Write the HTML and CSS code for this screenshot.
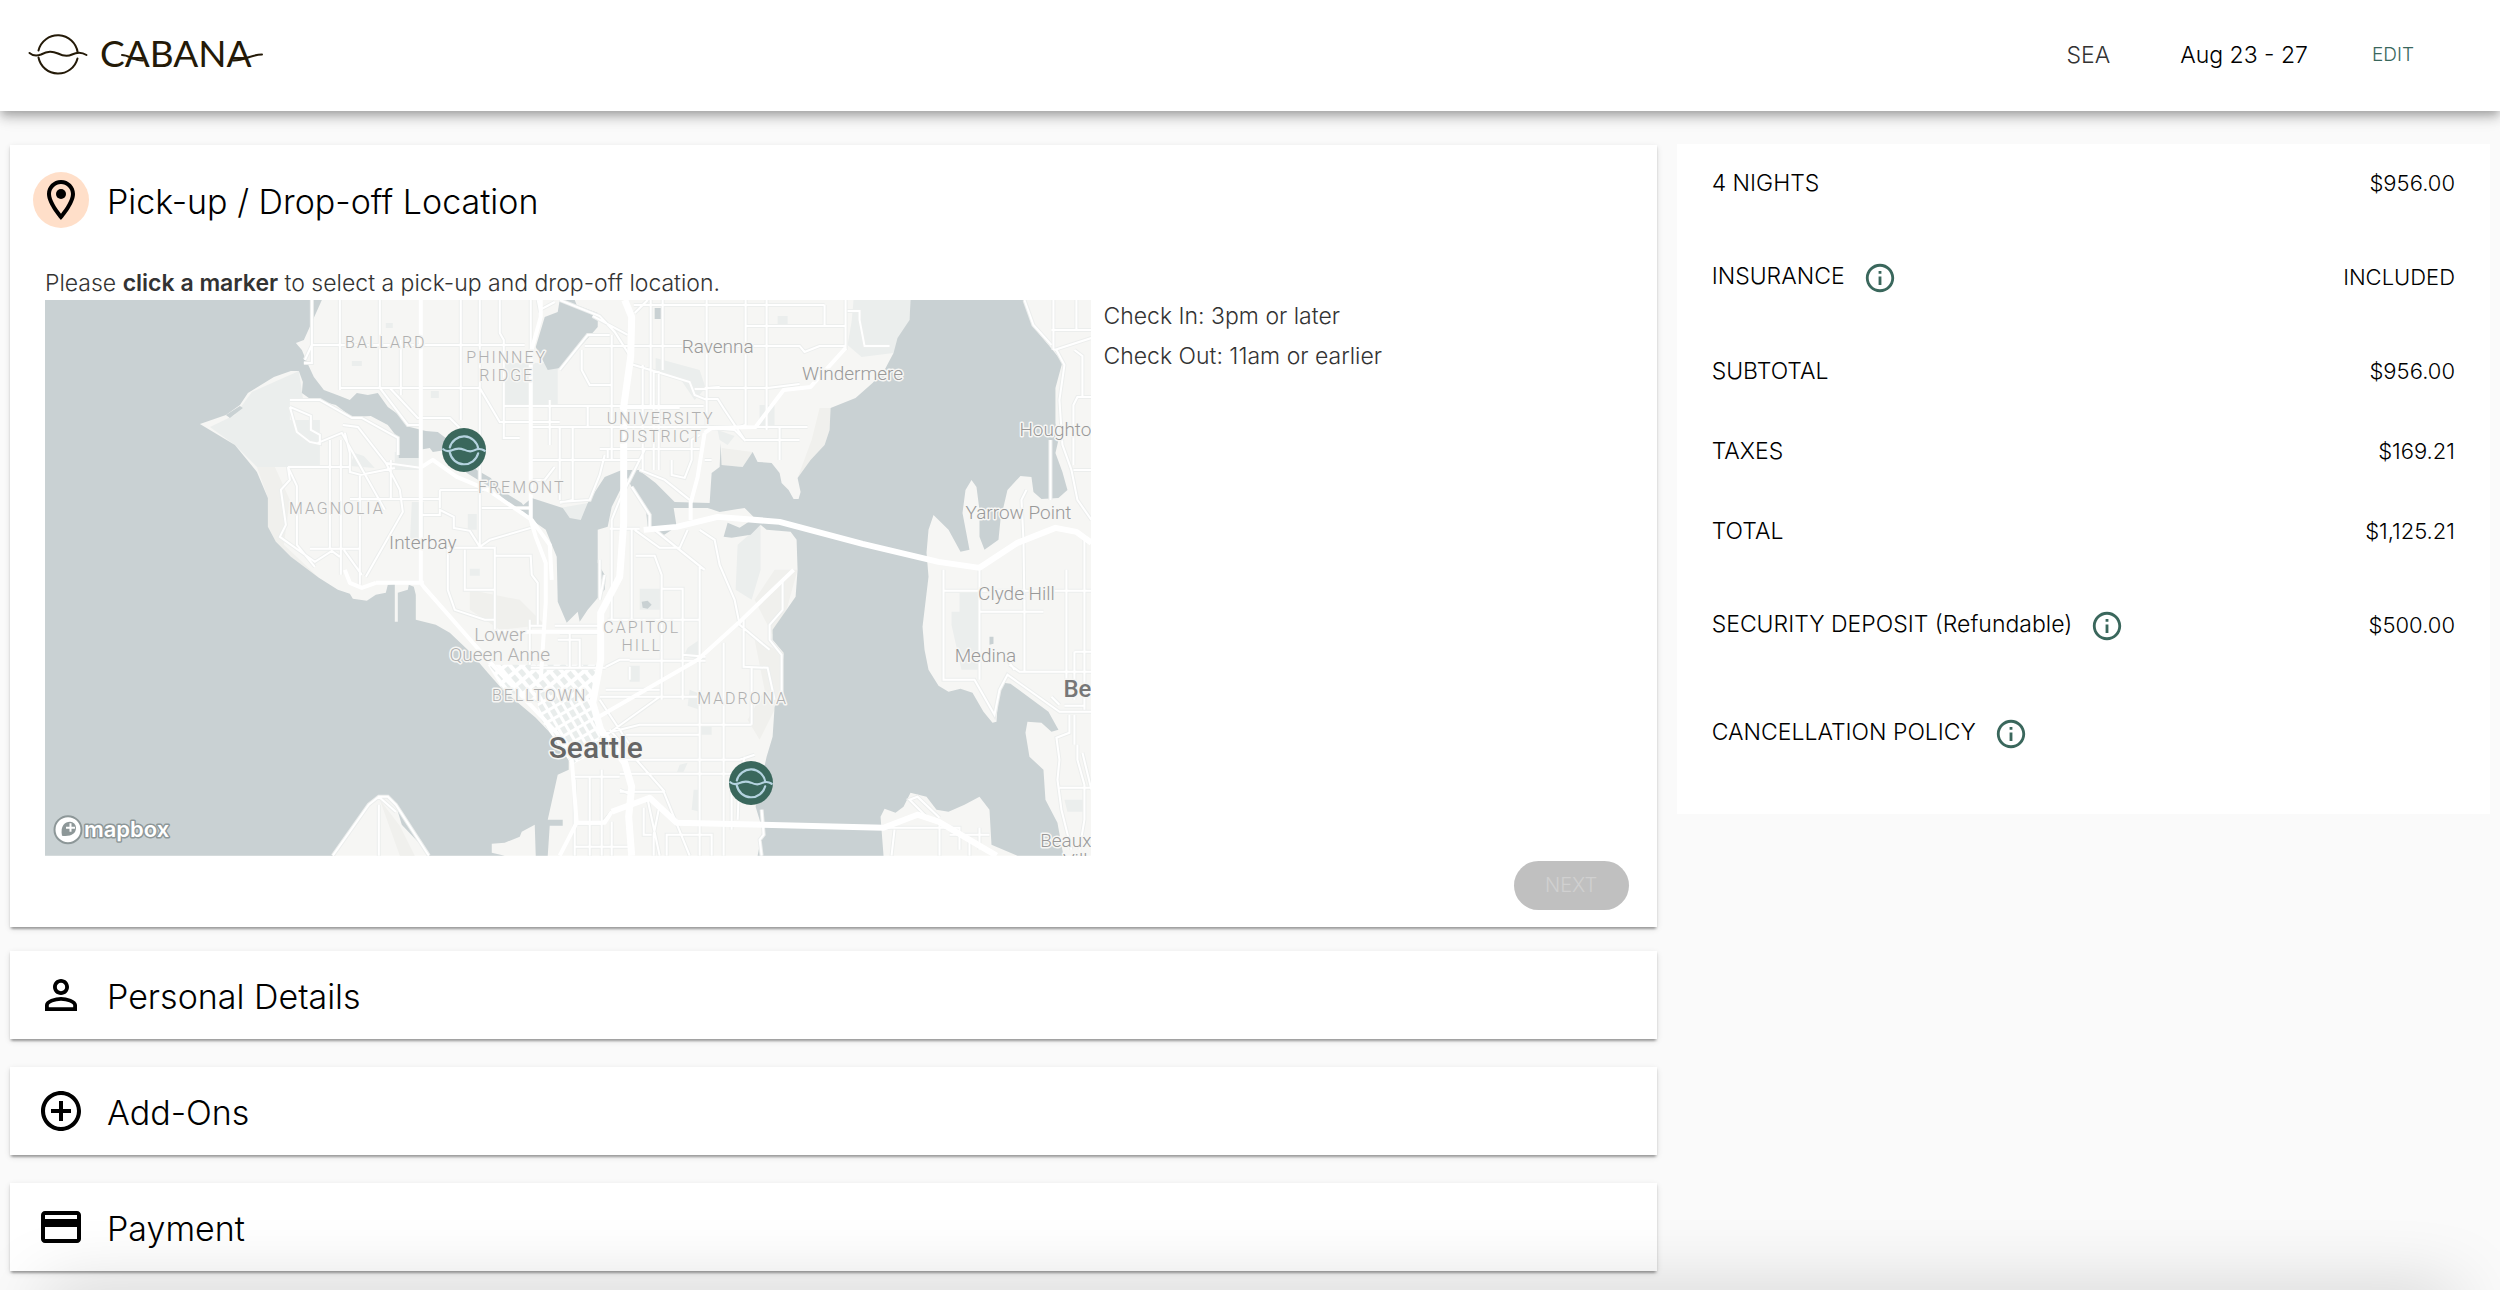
FILE: index.html
```html
<!DOCTYPE html>
<html lang="en">
<head>
<meta charset="utf-8">
<meta name="viewport" content="width=device-width, initial-scale=1">
<title>Cabana checkout</title>
<link rel="stylesheet" href="styles.css">
</head>
<body>
<svg class="sprite" aria-hidden="true">
  <symbol id="wave" viewBox="0 0 60 44">
    <g fill="none" stroke="currentColor" stroke-linecap="round">
      <path d="M10.5 18.500A20 20 0 0 1 49.700 20.500M10.500 25.500A20 20 0 0 0 49.500 26.500"/>
      <path d="M1.500 21C5 24 9 24 13 22.500C20 19 24 19 30 21.500C36 24.500 40 24.500 44 22.500C50 19.500 54 20 58.500 23"/>
    </g>
  </symbol>
  <symbol id="info" viewBox="0 0 24 24">
    <path d="M11 7h2v2h-2zm0 4h2v6h-2zm1-9C6.480 2 2 6.480 2 12s4.480 10 10 10 10-4.480 10-10S17.520 2 12 2zm0 18c-4.410 0-8-3.590-8-8s3.590-8 8-8 8 3.590 8 8-3.590 8-8 8z"/>
  </symbol>
</svg>

<header class="topbar">
  <a class="brand" href="#" aria-label="Cabana home">
    <svg class="brand-mark" aria-hidden="true"><use href="#wave"/></svg>
    <svg class="brand-name" viewBox="0 0 166 44">
      <text x="0" y="35">CABANA</text>
      <path d="M22 23C29 23 34 29 43 28.500M133 28.500C145 29 150 22.500 162 22.500"/>
    </svg>
  </a>
  <nav class="trip">
    <span class="trip-place">SEA</span>
    <span class="trip-dates">Aug 23 - 27</span>
    <button class="trip-edit" type="button">EDIT</button>
  </nav>
</header>

<div class="layout">
  <main class="steps">
    <section class="card card-open">
      <h2 class="step-title">
        <span class="step-icon step-icon-active"><svg viewBox="0 0 24 24"><path d="M12 2C8.130 2 5 5.130 5 9c0 5.250 7 13 7 13s7-7.750 7-13c0-3.870-3.130-7-7-7zM7 9c0-2.760 2.240-5 5-5s5 2.240 5 5c0 2.880-2.880 7.190-5 9.880C9.920 16.210 7 11.850 7 9z"/><circle cx="12" cy="9" r="2.500"/></svg></span>
        Pick-up / Drop-off Location
      </h2>
      <div class="step-body">
        <p class="hint">Please <strong>click a marker</strong> to select a pick-up and drop-off location.</p>
        <div class="pick">
          <div class="map">
            <svg class="map-art" viewBox="45 300 1047 556" role="img" aria-label="Map of Seattle">
              <defs>
                <pattern id="blocks" width="9" height="11" patternUnits="userSpaceOnUse" patternTransform="rotate(-40)">
                  <rect width="9" height="11" fill="#ffffff"/><rect x="1" y="1" width="5" height="7" fill="#e9edec"/>
                </pattern>
                <pattern id="blocks2" width="8" height="10" patternUnits="userSpaceOnUse" patternTransform="rotate(-30)">
                  <rect width="8" height="10" fill="#ffffff"/><rect x="1" y="1" width="5" height="7" fill="#e9edec"/>
                </pattern>
              </defs>
              <rect x="45" y="300" width="1047" height="556" fill="#f6f6f4"/>

              <!-- parks and campuses -->
              <g fill="#ebeeed">
                <path d="M299 371L303 398L290 402V420H320V467H257L235 445L210 427L235 415L252 392Z"/>
                <path d="M505 363H558V405H505ZM560 317L598 313V325L580 340L560 368L548 370ZM854 300H911L910 320L894 353L862 357L848 345L852 322Z"/>
                <path d="M656 358L700 370L706 388L695 400L680 378L656 370ZM412 502H424V545H410ZM640 589H662V610H640ZM738 545L761 525V570L752 600L736 590ZM570 520L581 520L588 503L560 508ZM960 593L980 593L982 670L962 670L952 625V612H960Z"/>
                <path d="M395 452H422V470H395ZM468 514H477V530H468ZM355 453L364 456L375 468L350 466ZM718 430L735 436L728 445L720 440ZM760 405H775V425H760ZM778 316H788V326H778ZM386 323H393V328H386ZM352 361H362V366H352ZM431 391H439V398H431ZM470 569H480V576H470ZM688 648L700 640V660L684 656ZM700 727H712V735H700ZM694 790L700 790V812L692 810ZM1065 800H1084V812H1068ZM680 765L688 763L684 772L676 776ZM630 666H640V682H630ZM690 690L705 696L700 710L688 706Z"/>
              </g>
              <g fill="#f0f0ed">
                <path d="M257 467L275 467L290 500L284 545L319 578L291 557L276 542L268 527V498ZM831 408L820 408L812 440L798 478L825 445L830 430ZM775 570L798 570L787 610L773 635L755 600ZM755 640L784 653L780 700L760 740L748 720L765 690ZM470 590L520 600L545 625L500 630L470 610ZM722 448L753 452L743 467L722 465ZM380 800L400 826L415 856H400Z"/>
              </g>

              <!-- shoreline -->
              <g fill="#c9d1d3">
                <path d="M45 300H322L304 340L296 343L302 350L307 362L314 377L324 390L340 396L350 400L357 393L368 395L378 393L388 407L402 417L410 427L426 431L438 432L446 438L465 450L477 470L491 478L501 490L522 503L528 512L515 510L495 490L467 473L446 450L433 452L430 448L419 450V458H399L398 438L388 425L371 416L352 417L336 405L309 398L302 393L303 382L299 371H291L274 377L248 393L240 405L226 415L200 424L235 445L257 472L268 498V527L276 542L291 557L319 578L338 590L350 594L353 599L367 601L376 595L386 593L388 585L395 584V622H398V593L408 590L409 585L414 587L416 595V620L436 625L450 633L470 652L488 673L503 690L536 718L557 740L569 760V770L558 775L548 820H563V826H550L548 856H536L535 825L522 832L520 837L505 843L492 844V853L505 856H429L419 843L402 825L396 805L388 797H379L369 805L333 856H45Z"/>
                <path d="M560 300L558 312L545 317L536 347L548 370L560 368L584 343L598 327V313L577 305L575 300ZM655 308H664V319H655ZM642 602L648 601L652 605L648 609L643 608ZM990 637L994 637V644L990 645ZM226 415L240 406L243 408L230 418Z"/>
                <path d="M532 498L563 508L570 518L581 520L588 503L605 477L622 470H639L656 483L675 502L710 503L712 473L720 467L721 443L722 465L743 467L753 452L758 462L772 463L780 473L782 483L789 490L794 499H799L801 492L798 478L811 460L825 445L830 430L831 408L856 398L873 383L885 370L894 353L898 338L910 320L911 300H1025L1034 327L1049 345L1063 362L1056 388V423L1059 440L1056 453L1063 472L1068 490L1059 498L1042 499L1034 492L1032 477L1021 476L1008 490L1001 520L999 540L985 550L980 537V510L977 487L972 480L966 490L963 513L970 550L961 552L949 530L934 515L929 530L927 553L929 577L923 627L925 650L929 670L939 686L949 692L961 689L973 693L984 712L993 723L997 722L999 693L1004 683L1011 684L1049 712L1059 730L1052 732L1042 723L1028 722L1026 733L1030 757L1044 770L1046 800L1058 823L1064 856H1018L992 845L990 810L980 797L965 805L949 812L937 810L927 797L911 793L904 807L896 813L885 809L881 817L884 856H758L763 830L756 807L767 757L773 737L775 707L780 700L784 653L773 640V630L787 610L796 597L798 570L797 540L791 532L767 530L761 525L751 535L732 538L724 537L728 523L740 528L755 518L745 508L720 512L708 508H674L677 527L663 536L648 527L646 507L632 487L627 477L612 507L608 527L598 530V563L606 577L605 590L588 610L580 622L578 612L567 623L558 602L557 557L546 530L532 520L520 508Z"/>
              </g>

              <!-- downtown blocks -->
              <path d="M488 665H596L593 703L545 705L503 690Z" fill="url(#blocks)"/>
              <path d="M536 690L593 700L601 730L610 745L572 765L540 718Z" fill="url(#blocks2)"/>

              <!-- streets -->
              <g fill="none" stroke-linejoin="round" stroke-linecap="round">
                <g id="streets">
                  <path d="M340 300V390M380 300V388M461 300V420M480 300V450M401 340V395M312 300V345L305 360M500 300V333L504 340V438H520M421 345H525M312 345H421M312 345V363H304M340 388H480M380 388L408 425H421M390 388L418 418L450 418L460 428M480 388L500 422H560M505 406H704M531 427H808M531 460H624M560 427V500M550 400V445M531 480H545L555 467M290 400H320L352 418H362L398 438V455M290 407L311 416V430L320 435V444L310 442L297 432L290 407M318 443L342 433L385 510M343 425L358 427L386 463L422 468M345 433L350 453V472L361 475M386 463L400 490L403 512L370 570L366 577M288 467H350M288 467L290 480L281 490L286 525L280 537L315 562L332 551L340 557M288 467L297 486V545L315 567M330 440V550M341 440V575M350 499H440M360 475V585M360 475L395 468M310 549H360M344 550L362 575M391 460V500M421 515H440V510L454 517V528L470 531L480 547L490 540L531 528M440 548H495M480 450V547M440 490H484M440 490V508M482 508H531M495 547V630M465 550V590H495M448 548V590L455 610L485 620H495M495 556H531L532 575L538 583V625M531 353V300M538 300L540 310L555 302M1051 440V500"/>
                  <path d="M560 300L600 316L615 332L631 357M560 370L588 335L610 335M585 346H707M582 350V370L590 385H612M612 335V460M620 408H680M588 406V427M573 427V500L560 503M593 316L628 335M651 300V405M663 300V370M643 365V470M654 371V470M659 371V470M707 300V425M746 300V425L740 427M767 300V430M648 300L635 313M634 305H707V305H825M746 326H846M825 305V326M846 300V350M848 311H860V320L865 346H890M707 346H800L805 352L820 346H846M705 388H768L800 384M631 364L664 374L690 382L695 395L707 400M695 389L720 387M707 399H718L725 410L745 440H800M780 428V460M712 428L735 430L746 441M600 449H700M560 460H640M608 450V458M645 450L620 500L612 520V620M605 455L600 475L590 500L560 502M640 470L665 480L690 500M672 460V475L685 478L692 460V440L700 435M705 460H712M632 487L650 515V528M610 529H640M632 530V620M635 530L660 548H680L688 530M655 530L705 570M636 556H655L662 575V700M700 530L715 540L720 565L735 600L740 625L770 650M783 580V610L770 625V640L782 655V700M662 589H683V700M608 620H700M630 661H706M683 655L706 657M606 690H660M600 697H700M660 697L600 740M630 667V680M600 560V600L605 575M700 565V856M724 643V856M744 620V667L768 668L775 700M752 668V725M700 570H700L700 735M606 667L620 660H630M600 735L640 725H752M626 735H700M625 760H740L755 755M620 774H740L738 820M575 777H620M575 780V856M590 777V856M602 770V856M612 822V856M620 790L632 795M620 792H664L690 856M575 824H602L612 812M610 730L665 792M600 700L640 760M644 808V835H652M660 805L654 835V856M648 800L660 856M667 856V835H712V856M732 790V830M745 757L742 770M576 847H632M762 810L764 835L760 840L762 856M555 626H600M560 633H601M558 640H580V668M530 620V665M570 633V668M545 626H530M531 668H606"/>
                  <path d="M1025 300L1034 325L1052 345M1054 300V350M1077 300V330M1052 330H1092M1055 350L1092 338M1057 350L1065 365L1060 400L1063 445L1072 470L1078 500L1092 520M1075 350L1083 356V398M1092 397H1078L1074 405V465M1074 470H1092M1027 490L1022 500L1024 540L1025 610M944 570V680H975L995 715L1000 690L1008 675L1060 712H1092M980 568V680M944 591H1092M980 612H1044M1010 665L1020 672H1092M1067 570V680M1085 535V710M1015 670L1008 660M1025 600V672M1075 652H1092M1075 652V700M1065 706H1085M1070 715V733L1057 738L1060 760L1058 780L1062 810L1072 850M1060 788H1092M1075 715V745M1078 745V760L1085 785V820L1080 850M1083 753L1092 790M1052 697L1060 705M884 828H960V850M930 820L910 800L918 797L940 818M895 830L892 856M940 822V856M950 835H990M970 838V856M980 828V850M379 805L379 856M333 856L369 805L379 797H388L396 805L429 856M379 797L396 812"/>
                </g>
              </g>
              <g class="casing"><use href="#streets"/></g>
              <g class="street"><use href="#streets"/></g>

              <g fill="none" stroke="#ffffff" stroke-width="4" stroke-linejoin="round">
                <path d="M421 300V583L424 587L488 660L557 733L572 760L577 823L560 856M541 300V317L531 353V520L536 537L546 563V603L541 680M705 433L698 477L691 503V520M705 433L712 428L756 427L784 390L811 387L846 348M594 720L698 660L739 623L794 570M422 467L433 460L457 477L488 490L532 520L550 545L552 580M376 583H424M345 570L350 583L362 588L376 583M495 632H600M577 823H605L612 812"/>
                <path stroke-width="7" d="M625 300L632 317L631 357L624 407V523L620 577L601 613V660L593 703L601 730L625 763L632 787L629 817L632 856"/>
                <path stroke-width="6" d="M644 530L677 527L718 517L780 522L863 544L939 562L980 568L1018 543L1056 528L1077 532L1092 543M612 812L650 798L677 823L884 828L918 815L939 822L997 856"/>
              </g>

              <g class="label-area" text-anchor="middle">
                <text x="386" y="348">BALLARD</text><text x="507" y="363">PHINNEY</text><text x="507" y="381">RIDGE</text>
                <text x="337" y="514">MAGNOLIA</text><text x="522" y="493">FREMONT</text><text x="661" y="424">UNIVERSITY</text><text x="661" y="442">DISTRICT</text>
                <text x="642" y="633">CAPITOL</text><text x="642" y="651">HILL</text><text x="743" y="704">MADRONA</text><text x="540" y="701">BELLTOWN</text>
              </g>
              <g class="label-town" text-anchor="middle">
                <text x="718" y="353">Ravenna</text><text x="853" y="380">Windermere</text><text x="423" y="549">Interbay</text>
                <text x="1019" y="519">Yarrow Point</text><text x="1017" y="600">Clyde Hill</text><text x="986" y="662">Medina</text>
                <text class="faint" x="500" y="641">Lower</text><text class="faint" x="500" y="661">Queen Anne</text>
              </g>
              <g class="label-town" text-anchor="end">
                <text x="1092" y="436">Houghto</text><text x="1092" y="847">Beaux</text><text x="1088" y="867">Vill</text>
              </g>
              <text class="label-city" x="1092" y="697" text-anchor="end">Be</text>
              <text class="label-city label-main" x="596" y="758" text-anchor="middle">Seattle</text>

              <g stroke="#8d9798" stroke-width="2">
                <circle cx="68" cy="830" r="13.500" fill="#ffffff"/>
                <path d="M62 836C60 826 65 822 70 822A6 6 0 0 1 76 828C76 834 71 837 62 836Z" fill="#8d9798" stroke="none"/>
                <path d="M70.500 823.500V832M66 828H75" stroke="#ffffff"/>
              </g>
              <text class="label-credit" x="84" y="837">mapbox</text>
            </svg>
            <button class="marker marker-fremont" type="button" aria-label="Fremont location"><svg><use href="#wave"/></svg></button>
            <button class="marker marker-madrona" type="button" aria-label="Madrona location"><svg><use href="#wave"/></svg></button>
          </div>
          <div class="times">
            <p>Check In: 3pm or later</p>
            <p>Check Out: 11am or earlier</p>
          </div>
        </div>
        <div class="actions"><button class="next" type="button" disabled>NEXT</button></div>
      </div>
    </section>

    <section class="card">
      <h2 class="step-title">
        <span class="step-icon"><svg viewBox="0 0 24 24"><path d="M12 5.900c1.160 0 2.100.94 2.100 2.100s-.94 2.100-2.100 2.100S9.900 9.160 9.900 8s.94-2.100 2.100-2.100m0 9c2.970 0 6.100 1.460 6.100 2.100v1.100H5.900V17c0-.64 3.130-2.100 6.100-2.100M12 4C9.790 4 8 5.790 8 8s1.790 4 4 4 4-1.790 4-4-1.790-4-4-4zm0 9c-2.670 0-8 1.340-8 4v3h16v-3c0-2.660-5.330-4-8-4z"/></svg></span>
        Personal Details
      </h2>
    </section>
    <section class="card">
      <h2 class="step-title">
        <span class="step-icon"><svg viewBox="0 0 24 24"><path d="M13 7h-2v4H7v2h4v4h2v-4h4v-2h-4V7zm-1-5C6.480 2 2 6.480 2 12s4.480 10 10 10 10-4.480 10-10S17.520 2 12 2zm0 18c-4.410 0-8-3.590-8-8s3.590-8 8-8 8 3.590 8 8-3.590 8-8 8z"/></svg></span>
        Add-Ons
      </h2>
    </section>
    <section class="card">
      <h2 class="step-title">
        <span class="step-icon"><svg viewBox="0 0 24 24"><path d="M20 4H4c-1.110 0-1.990.89-1.990 2L2 18c0 1.110.89 2 2 2h16c1.110 0 2-.89 2-2V6c0-1.110-.89-2-2-2zm0 14H4v-6h16v6zm0-10H4V6h16v2z"/></svg></span>
        Payment
      </h2>
    </section>
  </main>

  <aside class="summary">
    <table>
      <tr><th scope="row">4 NIGHTS</th><td>$956.00</td></tr>
      <tr class="tall"><th scope="row">INSURANCE<button class="info" type="button" aria-label="About insurance"><svg><use href="#info"/></svg></button></th><td>INCLUDED</td></tr>
      <tr><th scope="row">SUBTOTAL</th><td>$956.00</td></tr>
      <tr><th scope="row">TAXES</th><td>$169.21</td></tr>
      <tr><th scope="row">TOTAL</th><td>$1,125.21</td></tr>
      <tr class="tall"><th scope="row">SECURITY DEPOSIT (Refundable)<button class="info" type="button" aria-label="About the security deposit"><svg><use href="#info"/></svg></button></th><td>$500.00</td></tr>
      <tr class="tall"><th scope="row">CANCELLATION POLICY<button class="info" type="button" aria-label="About the cancellation policy"><svg><use href="#info"/></svg></button></th><td></td></tr>
    </table>
  </aside>
</div>
<div class="edge-shade"></div>
</body>
</html>
```

FILE: styles.css
```css
* { box-sizing: border-box; }

body {
  margin: 0;
  background: #fafafa;
  color: #000;
  font: 300 23px/30px Inter, "Liberation Sans", sans-serif;
}

h2, p { margin: 0; font-weight: inherit; }

button {
  padding: 0;
  border: 0;
  background: none;
  color: inherit;
  font: inherit;
  cursor: pointer;
}

.sprite { display: block; width: 0; height: 0; }

/* top bar */
.topbar {
  display: flex;
  align-items: center;
  justify-content: space-between;
  height: 111px;
  padding: 0 86px 4px 28px;
  background: #fff;
  box-shadow: 0 4px 8px -2px rgba(0,0,0,.2), 0 8px 10px rgba(0,0,0,.14), 0 2px 20px rgba(0,0,0,.12);
}
.brand { display: flex; align-items: center; gap: 12px; color: #241a08; }
.brand-mark { width: 60px; height: 44px; stroke-width: 2px; }
.brand-name { width: 166px; height: 44px; }
.brand-name text { font: 400 37px Lato, sans-serif; fill: #241a08; }
.brand-name path { fill: none; stroke: #241a08; stroke-width: 2px; stroke-linecap: round; }
.trip { display: flex; align-items: center; padding-top: 2px; }
.trip-place { margin-right: 70px; color: #333; }
.trip-dates { margin-right: 64px; }
.trip-edit { color: #3a675c; font-size: 19px; }

/* columns */
.layout { display: grid; grid-template-columns: 2fr 1fr; align-items: start; }
.steps { padding: 34px 10px 10px; }
.card {
  margin-bottom: 28px;
  padding: 16px 23px 12px;
  background: #fff;
  box-shadow: 0 4px 2px -2px rgba(0,0,0,.2), 0 2px 2px rgba(0,0,0,.14), 0 2px 6px rgba(0,0,0,.12);
}
.card:last-child { margin-bottom: 0; }
.card-open { margin-bottom: 24px; padding: 27px 28px 17px 23px; }

.step-title { display: flex; gap: 18px; font-size: 34px; line-height: 60px; }
.step-icon { width: 56px; height: 56px; padding: 4px; border-radius: 50%; }
.step-icon svg { display: block; width: 48px; height: 48px; }
.step-icon-active { background: #ffdfc9; }

.step-body { padding: 36px 0 0 12px; }
.hint { padding-bottom: 2px; color: #333; }
.hint strong { font-weight: 600; }
.pick { display: grid; grid-template-columns: 2fr 1fr; gap: 12px; padding-right: 2px; }
.map { position: relative; }
.map-art { display: block; width: 100%; height: auto; }
.times { display: flex; flex-direction: column; gap: 8px; color: #333; line-height: 32px; }
.actions { display: flex; justify-content: flex-end; padding-top: 5px; }
.next {
  width: 115px;
  height: 49px;
  border-radius: 25px;
  background: #c0c0c0;
  color: #d0d0d0;
  font-size: 20px;
}

/* map */
.casing { fill: none; stroke: #eceeed; stroke-width: 4px; }
.street { fill: none; stroke: #fff; stroke-width: 2px; }
.map-art text { paint-order: stroke; stroke: #f6f6f4; stroke-width: 3px; stroke-linejoin: round; font-family: Roboto, sans-serif; }
.label-area { font-size: 16px; letter-spacing: 2px; fill: #b0b0b0; }
.label-town { font-size: 19px; fill: #999; }
.label-town .faint { fill: #b0b0b0; }
.label-city { font-size: 24px; font-weight: 500; fill: #777; }
.label-main { font-size: 30px; fill: #666; }
.map-art .label-credit { font: 600 22px Inter, sans-serif; fill: #fff; stroke: #8d9798; }
.marker {
  position: absolute;
  width: 44px;
  height: 44px;
  border-radius: 50%;
  background: #3a675c;
  color: #b5d3e0;
  transform: translate(-50%, -50%);
}
.marker svg { display: block; width: 44px; height: 32px; stroke-width: 3px; }
.marker-fremont { left: 40%; top: 27%; }
.marker-madrona { left: 67.500%; top: 87%; }

/* price summary */
.summary { margin: 33px 10px 10px; padding: 0 35px 26px 35px; background: #fff; }
.summary table { width: 100%; border-collapse: collapse; }
.summary tr { height: 80px; }
.summary .tall { height: 108px; }
.summary th, .summary td { padding: 0 0 2px; font-weight: 300; text-align: left; }
.summary td { font-size: 22px; text-align: right; }
.summary .tall th { padding: 0; }
.info { margin-left: 18px; color: #3a675c; vertical-align: middle; }
.info svg { display: block; width: 34px; height: 34px; fill: currentColor; }

/* soft shade along the window's lower edge */
.edge-shade {
  position: fixed;
  right: 50px;
  bottom: -30px;
  left: 50px;
  height: 20px;
  box-shadow: 0 0 70px 6px rgba(0,0,0,.25);
  pointer-events: none;
}
```
